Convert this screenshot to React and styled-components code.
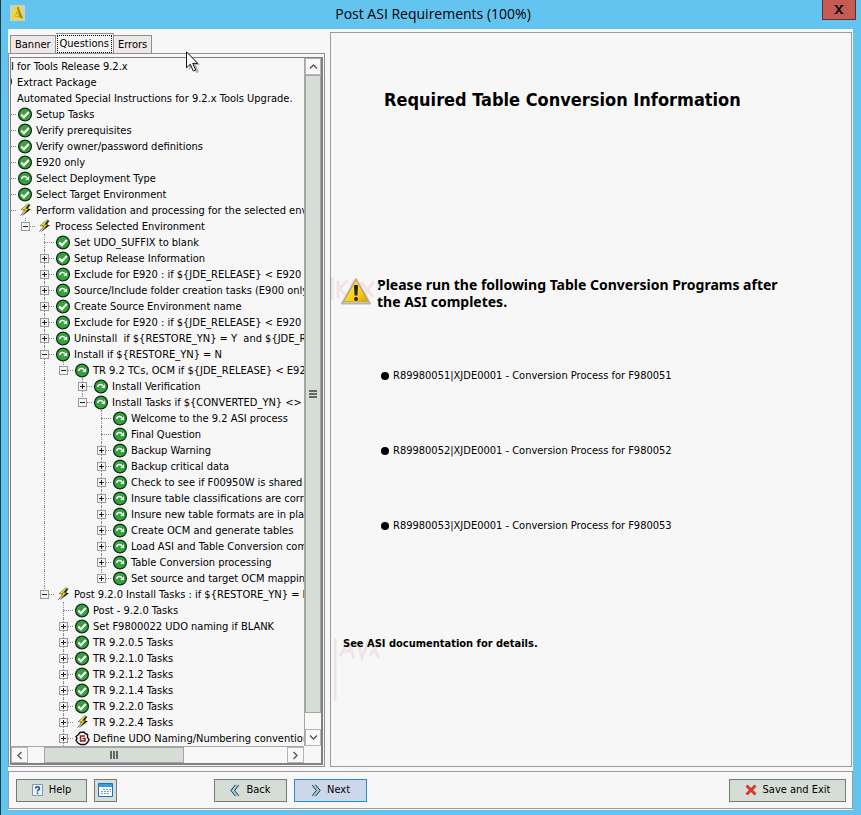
import React from "react";
import styled, { createGlobalStyle, css } from "styled-components";

// Tree rows: [level, icon, expander, label]
const rows = [
	[0, "check", "", "Setup Tasks"],
	[0, "check", "", "Verify prerequisites"],
	[0, "check", "", "Verify owner/password definitions"],
	[0, "check", "", "E920 only"],
	[0, "skip", "", "Select Deployment Type"],
	[0, "check", "", "Select Target Environment"],
	[0, "bolt", "", "Perform validation and processing for the selected envir"],
	[1, "bolt", "-", "Process Selected Environment"],
	[2, "check", "", "Set UDO_SUFFIX to blank"],
	[2, "check", "+", "Setup Release Information"],
	[2, "skip", "+", "Exclude for E920 : if ${JDE_RELEASE} < E920"],
	[2, "skip", "+", "Source/Include folder creation tasks (E900 only)"],
	[2, "check", "+", "Create Source Environment name"],
	[2, "skip", "+", "Exclude for E920 : if ${JDE_RELEASE} < E920"],
	[2, "skip", "+", "Uninstall  if ${RESTORE_YN} = Y  and ${JDE_RE"],
	[2, "skip", "-", "Install if ${RESTORE_YN} = N"],
	[3, "skip", "-", "TR 9.2 TCs, OCM if ${JDE_RELEASE} < E92"],
	[4, "skip", "+", "Install Verification"],
	[4, "skip", "-", "Install Tasks if ${CONVERTED_YN} <> 0"],
	[5, "skip", "", "Welcome to the 9.2 ASI process"],
	[5, "skip", "", "Final Question"],
	[5, "skip", "+", "Backup Warning"],
	[5, "skip", "+", "Backup critical data"],
	[5, "skip", "+", "Check to see if F00950W is shared w"],
	[5, "skip", "+", "Insure table classifications are corre"],
	[5, "skip", "+", "Insure new table formats are in plac"],
	[5, "skip", "+", "Create OCM and generate tables"],
	[5, "skip", "+", "Load ASI and Table Conversion com"],
	[5, "skip", "+", "Table Conversion processing"],
	[5, "skip", "+", "Set source and target OCM mapping"],
	[2, "bolt", "-", "Post 9.2.0 Install Tasks : if ${RESTORE_YN} = N"],
	[3, "check", "", "Post - 9.2.0 Tasks"],
	[3, "check", "+", "Set F9800022 UDO naming if BLANK"],
	[3, "check", "+", "TR 9.2.0.5 Tasks"],
	[3, "check", "+", "TR 9.2.1.0 Tasks"],
	[3, "check", "+", "TR 9.2.1.2 Tasks"],
	[3, "check", "+", "TR 9.2.1.4 Tasks"],
	[3, "check", "+", "TR 9.2.2.0 Tasks"],
	[3, "bolt", "+", "TR 9.2.2.4 Tasks"],
	[3, "group", "+", "Define UDO Naming/Numbering convention f"],
];

const programs = [
	"R89980051|XJDE0001 - Conversion Process for F980051",
	"R89980052|XJDE0001 - Conversion Process for F980052",
	"R89980053|XJDE0001 - Conversion Process for F980053",
];

// true when a sibling of the given level still follows below the row
const continues = (index, level) => {
	for (let i = index + 1; i < rows.length; i++) {
		if (rows[i][0] < level) return false;
		if (rows[i][0] === level) return true;
	}
	return level === 3;
};

const NodeIcon = ({ kind }) => {
	if (kind === "bolt") {
		return (
			<svg width="15" height="15" viewBox="0 0 15 15" aria-hidden="true">
				<path d="M11 1.5L5 7.5h4L3.5 13.500 13 6H9.500L12.500 1.500z" fill="#111" />
				<path d="M9.500 1L3 6.700h4L2.500 12.500 11 5.500H7.500L11 1z" fill="#f0e51c" stroke="#444" strokeWidth=".5" />
			</svg>
		);
	}
	if (kind === "group") {
		return (
			<svg width="15" height="15" viewBox="0 0 15 15" aria-hidden="true">
				<path d="M5 1.500l4-.5 1 1.500 2.500 1v3l1.500 2-1.500 3-2.500 2H5.500L3 12 1 9.500l1-2-1-2L3 4z" fill="#fff" stroke="#111" strokeWidth="1.400" />
				<path d="M10 5H5.500v5H10V7.500H7.500" fill="none" stroke="#8c1622" strokeWidth="1.500" />
			</svg>
		);
	}
	return (
		<svg width="15" height="15" viewBox="0 0 15 15" aria-hidden="true">
			<circle cx="7" cy="7.5" r="6.4" fill="#36a23c" stroke="#15301a" strokeWidth="1.3" />
			{kind === "check" ? (
				<path d="M3.3 7.5l2.6 2.7 4.9-5.2" fill="none" stroke="#fff" strokeWidth="2" />
			) : (
				<g>
					<path d="M3.6 8C4 5 7.600 4.600 9 6.800" fill="none" stroke="#fff" strokeWidth="1.5" />
					<path d="M11 5.2v3.800H7.200z" fill="#fff" />
				</g>
			)}
		</svg>
	);
};

const Chevron = ({ turn }) => (
	<svg width="9" height="9" viewBox="0 0 9 9" aria-hidden="true">
		<path d="M1 6.5L4.5 3 8 6.5" transform={`rotate(${turn} 4.5 4.5)`} fill="none" stroke="#555" strokeWidth="1.3" />
	</svg>
);

const DoubleArrow = ({ flip }) => (
	<svg width="10" height="13" viewBox="0 0 10 13" aria-hidden="true">
		<g transform={flip ? "rotate(180 5 6.5)" : undefined}>
			<path d="M5.500 .8L.8 6.500l4.700 5.700L9 12.200 4.600 6.500 9 .8z" fill="#9fcbdc" />
			<path d="M5.500 .8L.8 6.500l4.700 5.700M8.800 1.200L4.600 6.500l4.200 5.300" fill="none" stroke="#26343b" strokeWidth="1" />
		</g>
	</svg>
);

const App = () => {
	return (
		<Window>
			<GlobalStyle />
			<TitleBar>
				<svg width="15" height="16" viewBox="0 0 15 16" aria-hidden="true">
					<path d="M0 0h15v16H0z" fill="#cfd0b4" />
					<path d="M6 1L1 13.500h12L9 1z" fill="#f6d911" />
					<path d="M8 1l5 12.500-3-.5L7 3z" fill="#a98706" />
					<path d="M7 6.500l-1.500 5h3.500z" fill="#dcdcc8" stroke="#c4a20c" strokeWidth=".8" />
				</svg>
				<h1>Post ASI Requirements (100%)</h1>
				<CloseButton aria-label="Close">
					<svg width="10" height="9" viewBox="0 0 10 9" aria-hidden="true">
						<path d="M2 .5l6 8M8 .5l-6 8" stroke="#111" strokeWidth="1.800" />
						<path d="M.5 .5h3M6.500 .5h3M.5 8.500h3M6.500 8.500h3" stroke="#111" />
					</svg>
				</CloseButton>
			</TitleBar>

			<Client>
				<Body>
					<Sidebar>
						<Tabs role="tablist">
							<Tab role="tab">Banner</Tab>
							<Tab role="tab" aria-selected="true" $active>
								<span>Questions</span>
							</Tab>
							<Tab role="tab">Errors</Tab>
							<Pointer width="14" height="23" viewBox="0 0 14 23" aria-hidden="true">
								<path d="M3 3v16l4-4 3 7 3-1-3-7h4z" fill="#999" opacity=".7" />
								<path d="M.5 .8v16l3.800-3.600 3 6.800 2.400-1-3-6.600h5z" fill="#fff" stroke="#111" />
							</Pointer>
						</Tabs>
						<TabPane>
							<ScrollPane>
								<Tree role="tree">
									<TreeRow role="treeitem">I for Tools Release 9.2.x</TreeRow>
									<TreeRow role="treeitem">
										<ClippedIcon>
											<NodeIcon kind="skip" />
										</ClippedIcon>
										Extract Package
									</TreeRow>
									<TreeRow role="treeitem">
										<ClippedIcon />
										Automated Special Instructions for 9.2.x Tools Upgrade.
									</TreeRow>
									{rows.map(([level, icon, expander, label], index) => (
										<TreeRow role="treeitem" key={index}>
											<Stub $dotted={level === 0} />
											{Array.from({ length: level }, (_, i) => (
												<Guide
													key={i}
													$joint={i + 1 === level}
													$line={continues(index, i + 1)}
												>
													{i + 1 === level && expander && (
														<Expander aria-label={expander === "+" ? "Expand" : "Collapse"}>
															<svg width="9" height="9" viewBox="0 0 9 9" aria-hidden="true">
																<path d={expander === "+" ? "M2 4.5h5M4.5 2v5" : "M2 4.5h5"} stroke="#222" />
															</svg>
														</Expander>
													)}
												</Guide>
											))}
											<IconCell>
												<NodeIcon kind={icon} />
											</IconCell>
											<span>{label}</span>
										</TreeRow>
									))}
								</Tree>
								<ScrollBar $vertical>
									<ScrollButton $vertical aria-label="Scroll up">
										<Chevron turn={0} />
									</ScrollButton>
									<Thumb $vertical>
										<Grip $vertical />
									</Thumb>
									<TrackGap />
									<ScrollButton $vertical aria-label="Scroll down">
										<Chevron turn={180} />
									</ScrollButton>
								</ScrollBar>
								<ScrollBar>
									<ScrollButton aria-label="Scroll left">
										<Chevron turn={-90} />
									</ScrollButton>
									<TrackGap />
									<Thumb>
										<Grip />
									</Thumb>
									<TrackGap $fill />
									<ScrollButton aria-label="Scroll right">
										<Chevron turn={90} />
									</ScrollButton>
								</ScrollBar>
							</ScrollPane>
						</TabPane>
					</Sidebar>

					<Main>
						<h2>Required Table Conversion Information</h2>
						<Notice>
							<Ghost width="50" height="26" viewBox="0 0 50 26" aria-hidden="true">
								<path d="M1 1v23M7 5v17M17 4L8 13l10 9M24 4c-5 5-5 12 0 18M30 6l12 15M43 5L32 20M47 8v4" />
							</Ghost>
							<WarningIcon width="32" height="30" viewBox="0 0 32 30" aria-hidden="true">
								<defs>
									<linearGradient id="warn" x1="0" y1="0" x2="1" y2="1">
										<stop offset="0" stopColor="#ffe95a" />
										<stop offset=".6" stopColor="#fdd016" />
										<stop offset="1" stopColor="#dfa000" />
									</linearGradient>
								</defs>
								<path d="M16 3L2 27.500h28z" fill="#d4d4d4" stroke="#b5b5b5" strokeWidth="2" strokeLinejoin="round" />
								<path d="M16 4L4 25.500h24z" fill="url(#warn)" stroke="#c99b14" strokeWidth=".6" />
								<path d="M14 9.500q2-1.500 4 0l-.6 10h-2.800z" fill="#222" />
								<circle cx="16" cy="23" r="1.900" fill="#222" />
							</WarningIcon>
							<p>Please run the following Table Conversion Programs after the ASI completes.</p>
						</Notice>
						<Programs>
							{programs.map((name) => (
								<li key={name}>{name}</li>
							))}
						</Programs>
						<Details>
							<Ghost width="48" height="66" viewBox="0 0 48 66" aria-hidden="true">
								<path d="M1 2v63M6 20l8-14 6 16M9 15h9M24 6l4 16 6-16M37 6l8 16M45 6l-9 14" />
							</Ghost>
							<span>See ASI documentation for details.</span>
						</Details>
					</Main>
				</Body>

				<Footer>
					<Button>
						<svg width="11" height="12" viewBox="0 0 11 12" aria-hidden="true">
							<path d="M.5 .5h10v11H.5z" fill="#e9f0fa" stroke="#8796ab" />
							<path d="M3.500 4.500c0-2.500 4-2.500 4 0 0 1.500-2 1.200-2 3M5.500 8.500V10" fill="none" stroke="#234a8c" strokeWidth="1.500" />
						</svg>
						Help
					</Button>
					<Button $square aria-label="Calendar">
						<svg width="15" height="14" viewBox="0 0 15 14" aria-hidden="true">
							<path d="M.5 .5h14v13H.5z" fill="#fff" stroke="#1872bd" />
							<path d="M1 1h13v3H1z" fill="#3a9be0" />
							<path d="M5 6.500h8M3 8.500h10M3 10.500h8" stroke="#6a9cc0" strokeDasharray="2 1" />
						</svg>
					</Button>
					<Spacer $grow={97} />
					<Button $wide>
						<DoubleArrow />
						Back
					</Button>
					<Button $wide $primary>
						<DoubleArrow flip />
						Next
					</Button>
					<Spacer $grow={362} />
					<Button $large>
						<svg width="12" height="12" viewBox="0 0 12 12" aria-hidden="true">
							<path d="M1.500 1.500l9 9M10.500 1.500l-9 9" stroke="#d63a37" strokeWidth="3" />
						</svg>
						Save and Exit
					</Button>
				</Footer>
			</Client>
		</Window>
	);
};

const GlobalStyle = createGlobalStyle`
	* {
		box-sizing: border-box;
	}

	body {
		margin: 0;
		background: #63c5ef;
		color: #000;
		font: 11px/16px "DejaVu Sans Condensed", "Noto Sans", sans-serif;
	}

	h1, h2, p, ul {
		margin: 0;
		padding: 0;
	}

	button {
		font: inherit;
		color: inherit;
		border-radius: 0;
		padding: 0;
	}

	svg {
		display: block;
		flex: none;
	}
`;

const Window = styled.div`
	min-height: 100vh;
	padding: 0 8px 6px 7px;
	border-left: 1px solid #1d3a47;
	background: #63c5ef;
`;

const TitleBar = styled.header`
	height: 29px;
	display: grid;
	grid-template-columns: 34px 1fr 34px;
	padding-left: 2px;
	margin-right: -3px;

	> svg {
		margin-top: 5px;
	}

	h1 {
		font: 400 14px/28px "Open Sans", sans-serif;
		text-align: center;
	}
`;

const CloseButton = styled.button`
	height: 20px;
	display: flex;
	align-items: center;
	justify-content: center;
	background: #c65b54;
	border: 1px solid #5a2f2c;
	border-top: 0;
`;

const Client = styled.div`
	background: #f7f7f7;
	padding-bottom: 1px;
`;

const Body = styled.div`
	display: flex;
	gap: 5px;
	padding: 3px 1px 4px 0;
`;

const Sidebar = styled.aside`
	width: 317px;
	flex: none;
`;

const Tabs = styled.div`
	position: relative;
	display: flex;
	align-items: flex-end;
	height: 21px;
	padding-left: 2px;
`;

const Tab = styled.button`
	height: 18px;
	padding: 0 4px;
	border: 1px solid #8f8f8f;
	border-bottom: 0;
	background: #eee8e8;

	& + & {
		border-left: 0;
	}

	${({ $active }) =>
		$active &&
		css`
			height: 20px;
			padding: 0 1px;
			background: #f7f7f7;

			span {
				display: block;
				padding: 0 2px;
				border: 1px dotted #000;
			}
		`}
`;

const Pointer = styled.svg`
	position: absolute;
	left: 178px;
	top: 19px;
	z-index: 2;
`;

const TabPane = styled.div`
	padding: 3px 1px 1px;
	border: 1px solid #8f8f8f;
`;

const ScrollPane = styled.div`
	display: grid;
	grid-template-columns: minmax(0, 1fr) 17px;
	border: 1px solid #7f7f84;
	border-right-width: 2px;
	border-bottom-width: 2px;
`;

const Tree = styled.div`
	overflow: hidden;
	line-height: 17px;
`;

const TreeRow = styled.div`
	display: flex;
	height: 16px;
	white-space: pre;
`;

const ClippedIcon = styled.div`
	width: 2px;
	margin-right: 4px;
	overflow: hidden;
	display: flex;
	justify-content: flex-end;
`;

const Stub = styled.div`
	width: 5px;
	height: 9px;
	flex: none;
	border-bottom: 1px ${({ $dotted }) => ($dotted ? "dotted #8a8a8a" : "solid transparent")};
`;

const Guide = styled.div`
	display: grid;
	grid-template-columns: 9px 10px;
	grid-template-rows: 9px 7px;
	width: 19px;
	flex: none;

	&::before {
		content: "";
		grid-area: 1 / 2 / ${({ $line }) => ($line ? "3" : "2")} / 3;
		border-left: ${({ $line, $joint }) => ($line || $joint ? "1px dotted #8a8a8a" : "0")};
	}

	&::after {
		content: "";
		grid-area: 1 / 2 / 2 / 3;
		border-bottom: ${({ $joint }) => ($joint ? "1px dotted #8a8a8a" : "0")};
	}
`;

const Expander = styled.button`
	grid-area: 1 / 1 / 3 / 3;
	z-index: 1;
	width: 9px;
	height: 9px;
	margin: 4px 0 0 5px;
	border: 0;
	outline: 1px solid #9b9b9b;
	outline-offset: -1px;
	background: #f3f3f3;
`;

const IconCell = styled.div`
	width: 19px;
	margin-right: 1px;
	padding-left: 2px;
	flex: none;
	display: flex;
	align-items: center;
`;

const ScrollBar = styled.div`
	display: flex;
	flex-direction: ${({ $vertical }) => ($vertical ? "column" : "row")};
	background: #f8f8f8;
	border: 0 solid #a6a6a6;
	${({ $vertical }) => ($vertical ? "border-left-width: 1px;" : "height: 17px; border-top-width: 1px;")}
`;

const ScrollButton = styled.button`
	flex: none;
	${({ $vertical }) => ($vertical ? "height: 17px;" : "width: 17px;")}
	display: flex;
	align-items: center;
	justify-content: center;
	border: 1px solid #b5b5b5;
	background: #f8f8f8;
`;

const Thumb = styled.div`
	${({ $vertical }) => ($vertical ? "flex: 1;" : "width: 140px;")}
	display: flex;
	align-items: center;
	justify-content: center;
	background: #d6ddd6;
	border: 1px solid #a6a6a6;
`;

const Grip = styled.div`
	width: 8px;
	height: 8px;
	background: repeating-linear-gradient(
		${({ $vertical }) => ($vertical ? "180deg" : "90deg")},
		#666 0 2px,
		transparent 2px 3px
	);
`;

const TrackGap = styled.div`
	flex: ${({ $fill }) => ($fill ? "1" : "0 0 16px")};
`;

const Main = styled.main`
	flex: 1;
	min-width: 0;
	border: 1px solid #9b9b9b;
	padding: 55px 11px 0;

	h2 {
		margin-left: 42px;
		font-size: 18px;
		line-height: 24px;
		font-weight: 700;
	}
`;

const Notice = styled.div`
	position: relative;
	display: flex;
	gap: 5px;
	max-width: 450px;
	margin: 164px 0 58px -2px;

	p {
		font: 700 14px/17px "Noto Sans", sans-serif;
	}
`;

const WarningIcon = styled.svg`
	position: relative;
`;

// faint leftover strokes behind the text
const Ghost = styled.svg`
	position: absolute;
	left: -9px;
	top: 0;
	fill: none;
	stroke: #f0e4e6;
	stroke-width: 3;
`;

const Programs = styled.ul`
	display: grid;
	gap: 59px;
	margin-left: 39px;
	list-style: none;

	li {
		display: flex;
		align-items: center;
		gap: 4px;
	}

	li::before {
		content: "";
		width: 8px;
		height: 8px;
		border-radius: 50%;
		background: #000;
	}
`;

const Details = styled.p`
	position: relative;
	margin: 102px 0 0 1px;
	font-weight: 700;

	span {
		position: relative;
	}
`;

const Footer = styled.footer`
	display: flex;
	align-items: center;
	height: 38px;
	padding: 0 6px 0 7px;
	border: 1px solid #9b9b9b;
`;

const Button = styled.button`
	width: ${({ $square, $wide, $large }) => ($square ? "23px" : $wide ? "73px" : $large ? "117px" : "71px")};
	height: 23px;
	flex: none;
	display: flex;
	align-items: center;
	justify-content: center;
	gap: 6px;
	background: ${({ $primary }) => ($primary ? "#cdd7ea" : "#d6ddd6")};
	border: 1px solid ${({ $primary }) => ($primary ? "#2f86c8" : "#777a72")};

	& + & {
		margin-left: 7px;
	}
`;

const Spacer = styled.div`
	flex: ${({ $grow }) => $grow} 1 0;
`;

export default App;
